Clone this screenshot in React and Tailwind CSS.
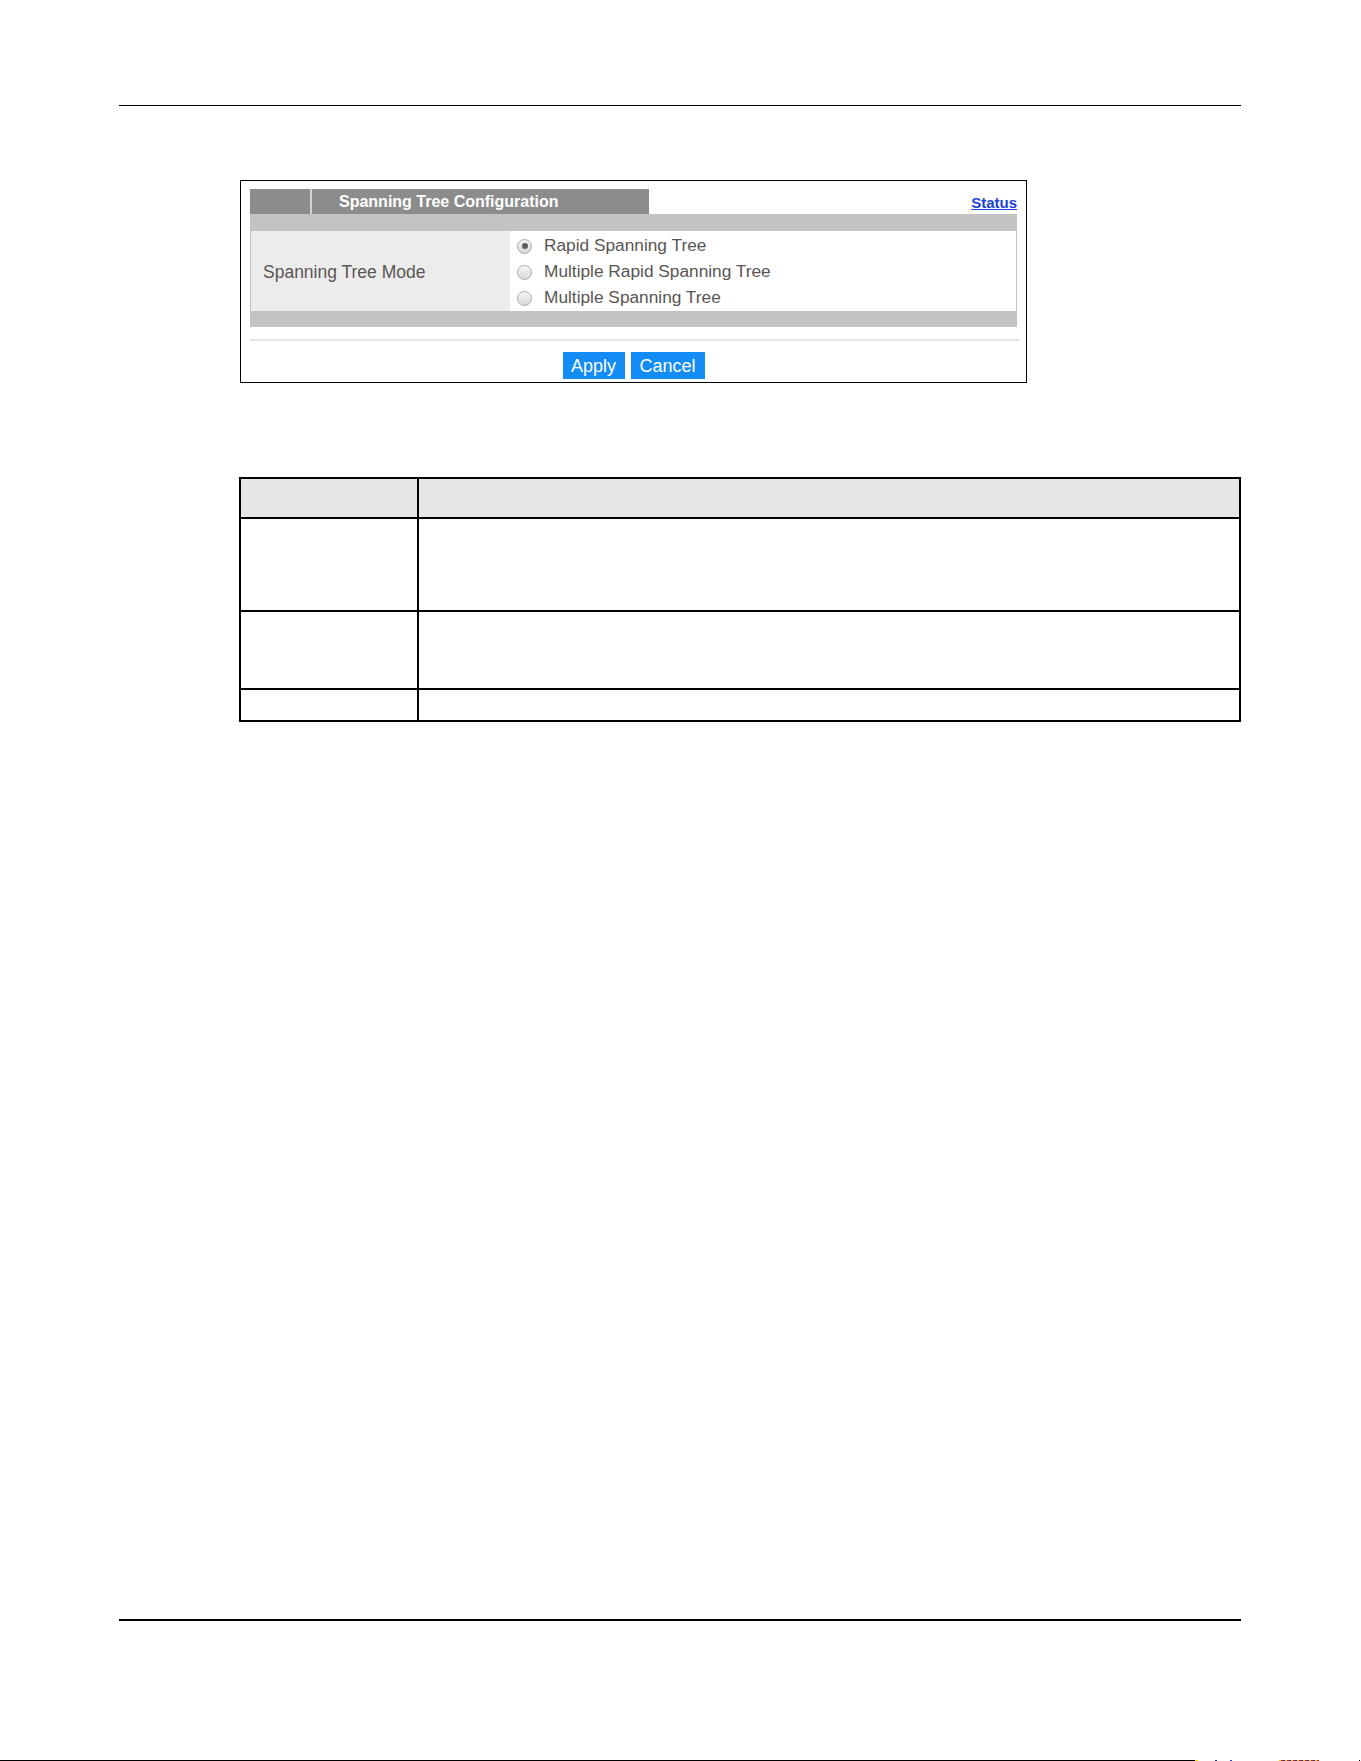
import React, { useState } from "react";

const modes = ["Rapid Spanning Tree", "Multiple Rapid Spanning Tree", "Multiple Spanning Tree"];

function Radio({ checked }) {
    return (
        <span className="relative w-[15px] h-[15px] rounded-full border border-[#ababab] bg-gradient-to-b from-[#f6f6f6] to-[#d8d8d8] shrink-0">
            {checked && (
                <span className="absolute left-[3.5px] top-[3.5px] w-[6px] h-[6px] rounded-full bg-[#5c5c5c]" />
            )}
        </span>
    );
}

export default function App() {
    const [mode, setMode] = useState(0);

    return (
        <div className="w-[1361px] h-[1761px] bg-white flex flex-col font-['Liberation_Sans',Arial,sans-serif]">
            <div className="h-[105px] shrink-0" />
            <div className="ml-[119px] w-[1122px] h-px bg-black shrink-0" />

            {/* configuration panel */}
            <div className="mt-[74px] ml-[240px] w-[787px] h-[203px] border border-black shrink-0 pt-[8px] pl-[9px] pr-[9px]">
                <div className="flex items-stretch h-[25px]">
                    <div className="w-[60px] bg-[#8c8c8c]" />
                    <div className="w-[2px] bg-[#d2d2d2]" />
                    <div className="w-[337px] bg-[#8c8c8c] pl-[27px] flex items-center text-white font-bold text-[16px]">
                        Spanning Tree Configuration
                    </div>
                    <div className="flex-1 flex items-center justify-end">
                        <a href="#" className="text-[#1a3fd6] underline font-bold text-[15px] leading-none mt-[2px]">
                            Status
                        </a>
                    </div>
                </div>

                <div className="bg-[#c3c3c3] pt-[17px] pb-[16px] px-px">
                    <div className="flex h-[80px]">
                        <div className="w-[259px] bg-[#ececec] pl-[12px] pt-[3px] flex items-center text-[17.5px] text-[#5a5553]">
                            Spanning Tree Mode
                        </div>
                        <div className="flex-1 bg-white flex flex-col pl-[7px] pt-[2px]">
                            {modes.map((m, i) => (
                                <label
                                    key={m}
                                    onClick={() => setMode(i)}
                                    className="h-[26.5px] flex items-center gap-[12px] text-[17.3px] text-[#5a5553] cursor-pointer"
                                >
                                    <Radio checked={mode === i} />
                                    {m}
                                </label>
                            ))}
                        </div>
                    </div>
                </div>

                <div className="mt-[12px] h-[2px] bg-[#e3e3e3] mr-[-2px]" />

                <div className="mt-[11px] flex justify-center gap-[6px]">
                    <button className="w-[62px] h-[27px] bg-[#148cf5] text-white text-[18px] leading-none">Apply</button>
                    <button className="w-[74px] h-[27px] bg-[#148cf5] text-white text-[18px] leading-none">Cancel</button>
                </div>
            </div>

            {/* field description table */}
            <table className="mt-[94px] ml-[239px] w-[1002px] border-collapse border-2 border-black shrink-0">
                <tbody>
                    <tr className="h-[40px] bg-[#e6e6e6]">
                        <td className="w-[178px] border-2 border-black" />
                        <td className="border-2 border-black" />
                    </tr>
                    <tr className="h-[93px]">
                        <td className="border-2 border-black" />
                        <td className="border-2 border-black" />
                    </tr>
                    <tr className="h-[78px]">
                        <td className="border-2 border-black" />
                        <td className="border-2 border-black" />
                    </tr>
                    <tr className="h-[32px]">
                        <td className="border-2 border-black" />
                        <td className="border-2 border-black" />
                    </tr>
                </tbody>
            </table>

            <div className="flex-1" />
            <div className="ml-[119px] w-[1122px] h-[2px] bg-black shrink-0" />
            <div className="h-[139px] shrink-0" />
            <div className="flex h-px shrink-0">
                <div className="w-[1195px] bg-black" />
                <div className="w-[3px] bg-[#f5e400]" />
                <div className="w-[17px]" />
                <div className="w-[2px] bg-[#2030d0]" />
                <div className="w-[13px]" />
                <div className="w-[2px] bg-[#3040e0]" />
                <div className="w-[47px]" />
                <div className="w-[40px] bg-[repeating-linear-gradient(90deg,#e8d000_0_2px,#d02020_2px_4px,#2030c0_4px_6px)]" />
                <div className="w-[40px]" />
                <div className="w-px bg-black" />
            </div>
        </div>
    );
}
